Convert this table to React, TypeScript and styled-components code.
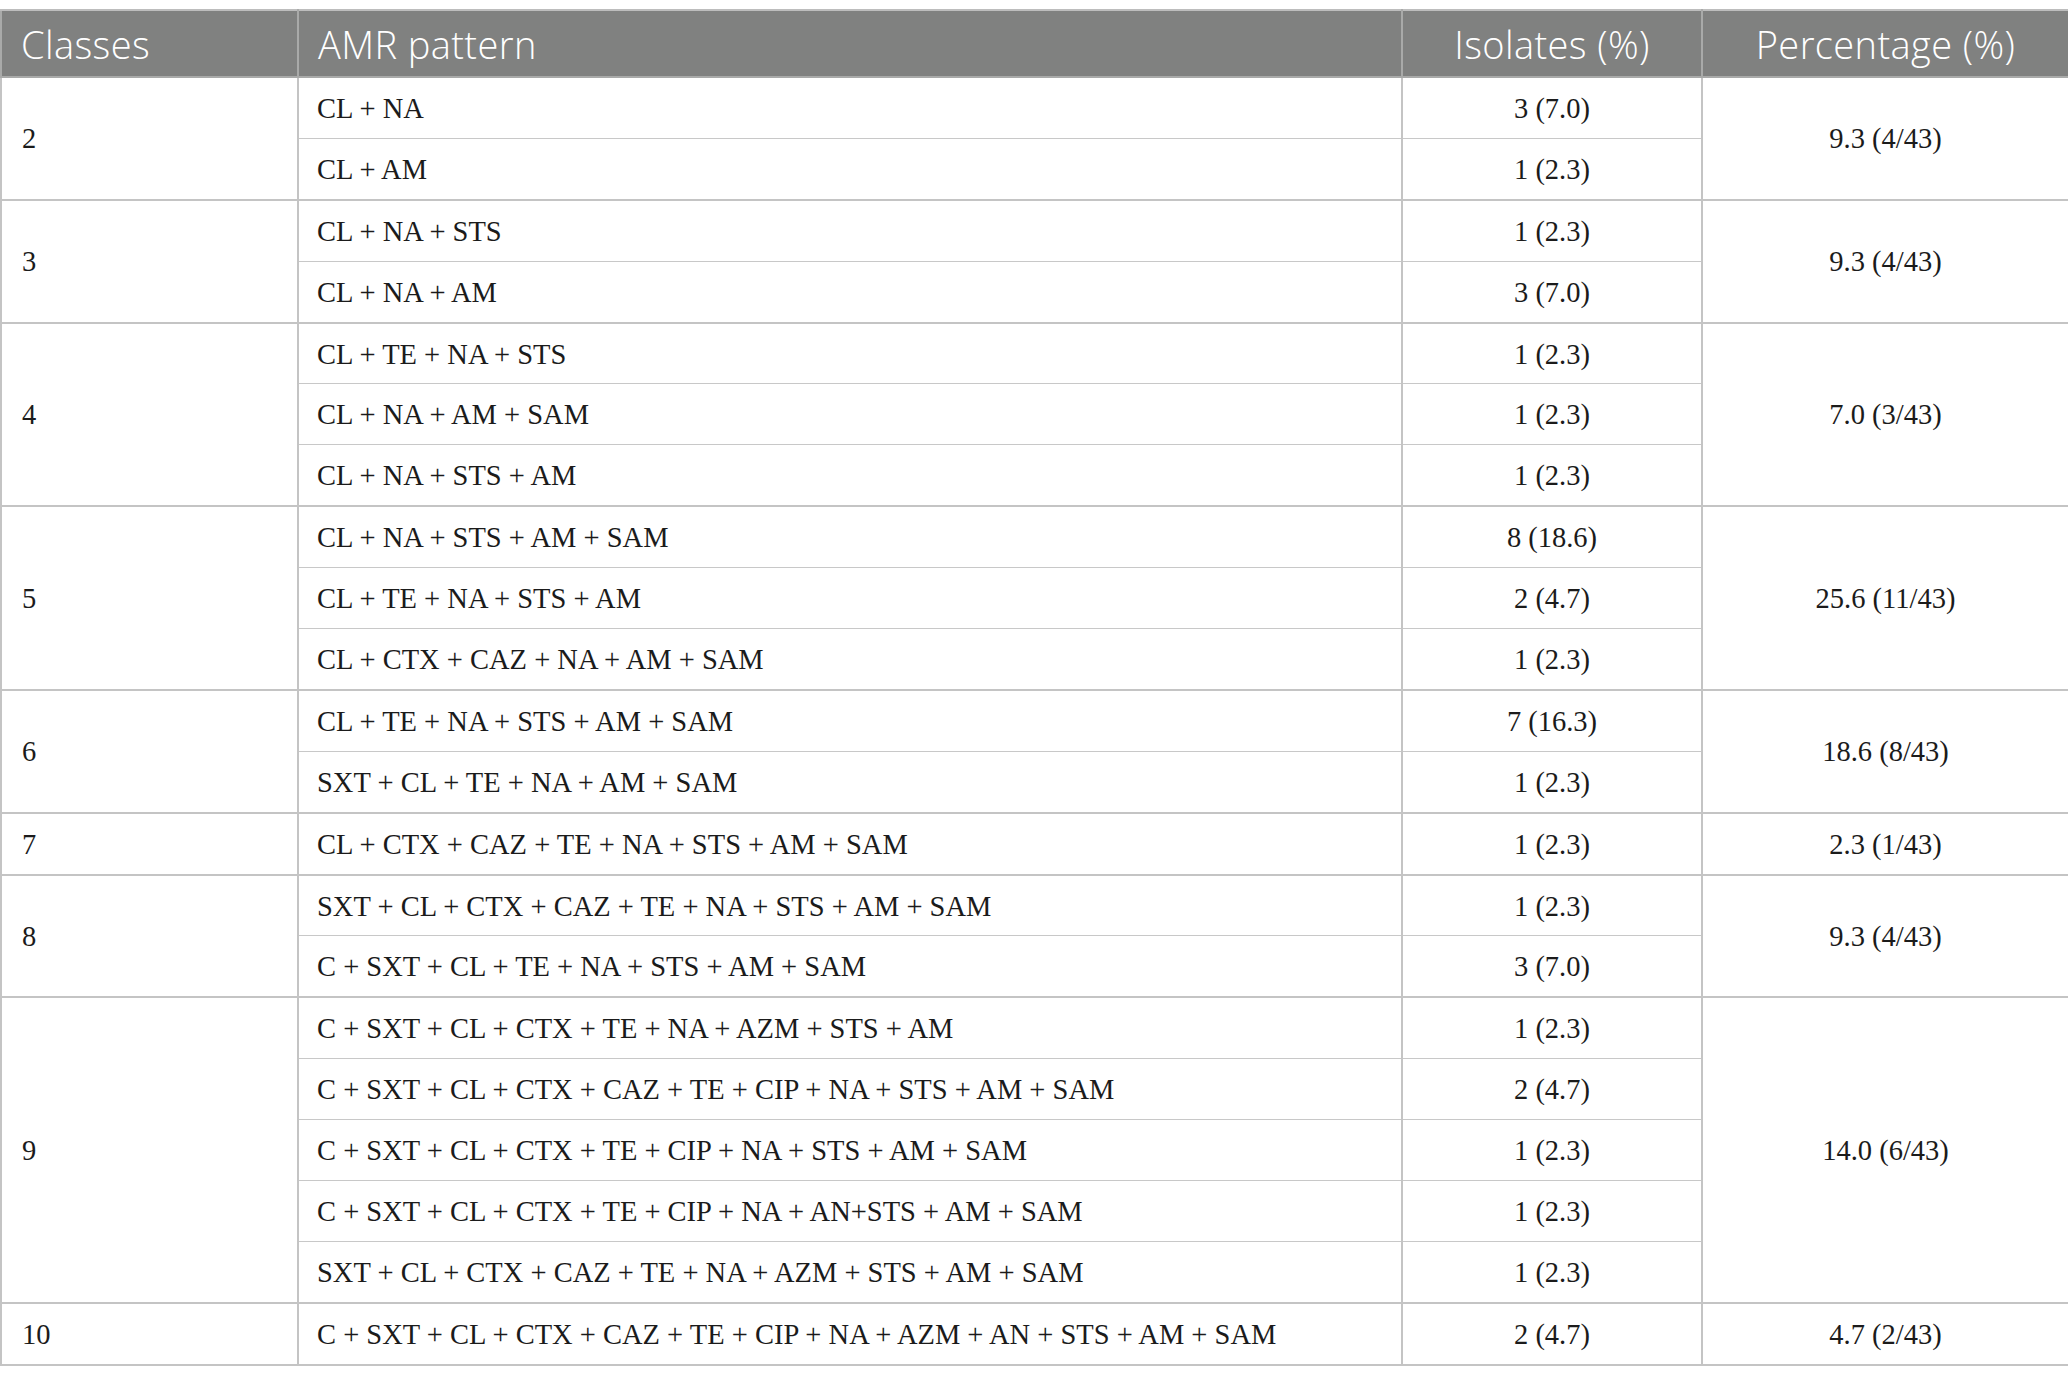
import React from "react";
import styled, { createGlobalStyle } from "styled-components";

const GlobalStyle = createGlobalStyle`
  html, body { margin: 0; padding: 0; background: #ffffff; }
  body { font-family: "Liberation Serif", "Times New Roman", serif; }
`;

type Row = { pattern: string; isolates: string };
type Group = { cls: string; pct: string; rows: Row[] };

const data: Group[] = [
  { cls: "2", pct: "9.3 (4/43)", rows: [
    { pattern: "CL + NA", isolates: "3 (7.0)" },
    { pattern: "CL + AM", isolates: "1 (2.3)" },
  ] },
  { cls: "3", pct: "9.3 (4/43)", rows: [
    { pattern: "CL + NA + STS", isolates: "1 (2.3)" },
    { pattern: "CL + NA + AM", isolates: "3 (7.0)" },
  ] },
  { cls: "4", pct: "7.0 (3/43)", rows: [
    { pattern: "CL + TE + NA + STS", isolates: "1 (2.3)" },
    { pattern: "CL + NA + AM + SAM", isolates: "1 (2.3)" },
    { pattern: "CL + NA + STS + AM", isolates: "1 (2.3)" },
  ] },
  { cls: "5", pct: "25.6 (11/43)", rows: [
    { pattern: "CL + NA + STS + AM + SAM", isolates: "8 (18.6)" },
    { pattern: "CL + TE + NA + STS + AM", isolates: "2 (4.7)" },
    { pattern: "CL + CTX + CAZ + NA + AM + SAM", isolates: "1 (2.3)" },
  ] },
  { cls: "6", pct: "18.6 (8/43)", rows: [
    { pattern: "CL + TE + NA + STS + AM + SAM", isolates: "7 (16.3)" },
    { pattern: "SXT + CL + TE + NA + AM + SAM", isolates: "1 (2.3)" },
  ] },
  { cls: "7", pct: "2.3 (1/43)", rows: [
    { pattern: "CL + CTX + CAZ + TE + NA + STS + AM + SAM", isolates: "1 (2.3)" },
  ] },
  { cls: "8", pct: "9.3 (4/43)", rows: [
    { pattern: "SXT + CL + CTX + CAZ + TE + NA + STS + AM + SAM", isolates: "1 (2.3)" },
    { pattern: "C + SXT + CL + TE + NA + STS + AM + SAM", isolates: "3 (7.0)" },
  ] },
  { cls: "9", pct: "14.0 (6/43)", rows: [
    { pattern: "C + SXT + CL + CTX + TE + NA + AZM + STS + AM", isolates: "1 (2.3)" },
    { pattern: "C + SXT + CL + CTX + CAZ + TE + CIP + NA + STS + AM + SAM", isolates: "2 (4.7)" },
    { pattern: "C + SXT + CL + CTX + TE + CIP + NA + STS + AM + SAM", isolates: "1 (2.3)" },
    { pattern: "C + SXT + CL + CTX + TE + CIP + NA + AN+STS + AM + SAM", isolates: "1 (2.3)" },
    { pattern: "SXT + CL + CTX + CAZ + TE + NA + AZM + STS + AM + SAM", isolates: "1 (2.3)" },
  ] },
  { cls: "10", pct: "4.7 (2/43)", rows: [
    { pattern: "C + SXT + CL + CTX + CAZ + TE + CIP + NA + AZM + AN + STS + AM + SAM", isolates: "2 (4.7)" },
  ] },
];

const Page = styled.div`
  padding-top: 9px;
  width: 2068px;
`;

const Table = styled.table`
  width: 2068px;
  border-collapse: collapse;
  table-layout: fixed;
  border: 2px solid #c4c4c4;
`;

const HeadCell = styled.th<{ $align?: "left" | "center" }>`
  background: #808180;
  color: #ffffff;
  font-family: "Open Sans", "Noto Sans", sans-serif;
  font-weight: 300;
  font-size: 38px;
  letter-spacing: 0.4px;
  height: 65px;
  padding: 0 0 0 ${(p) => (p.$align === "center" ? "0" : "19px")};
  text-align: ${(p) => p.$align ?? "left"};
  border: 2px solid #a9aaa9;
  border-top-color: #bdbdbd;
`;

const Cell = styled.td<{ $align?: "left" | "center"; $groupEnd?: boolean; $first?: boolean }>`
  font-family: "Liberation Serif", "Times New Roman", serif;
  font-size: 28.5px;
  color: #1b1b1b;
  height: 57.9px;
  padding: 2px 0 0 ${(p) => (p.$align === "center" ? "0" : p.$first ? "20px" : "18px")};
  text-align: ${(p) => p.$align ?? "left"};
  vertical-align: middle;
  border-left: 2px solid #c4c4c4;
  border-right: 2px solid #c4c4c4;
  border-top: 1px solid #c8c8c8;
  border-bottom: ${(p) => (p.$groupEnd ? "2px solid #c4c4c4" : "1px solid #c8c8c8")};
  white-space: nowrap;
`;

export default function App() {
  return (
    <Page>
      <GlobalStyle />
      <Table>
        <colgroup>
          <col style={{ width: 297 }} />
          <col style={{ width: 1104 }} />
          <col style={{ width: 300 }} />
          <col style={{ width: 367 }} />
        </colgroup>
        <thead>
          <tr>
            <HeadCell>Classes</HeadCell>
            <HeadCell>AMR pattern</HeadCell>
            <HeadCell $align="center">Isolates (%)</HeadCell>
            <HeadCell $align="center">Percentage (%)</HeadCell>
          </tr>
        </thead>
        <tbody>
          {data.map((g) =>
            g.rows.map((r, i) => {
              const last = i === g.rows.length - 1;
              return (
                <tr key={g.cls + "-" + i}>
                  {i === 0 && (
                    <Cell rowSpan={g.rows.length} $groupEnd $first>
                      {g.cls}
                    </Cell>
                  )}
                  <Cell $groupEnd={last}>{r.pattern}</Cell>
                  <Cell $align="center" $groupEnd={last}>{r.isolates}</Cell>
                  {i === 0 && (
                    <Cell rowSpan={g.rows.length} $align="center" $groupEnd>
                      {g.pct}
                    </Cell>
                  )}
                </tr>
              );
            })
          )}
        </tbody>
      </Table>
    </Page>
  );
}
